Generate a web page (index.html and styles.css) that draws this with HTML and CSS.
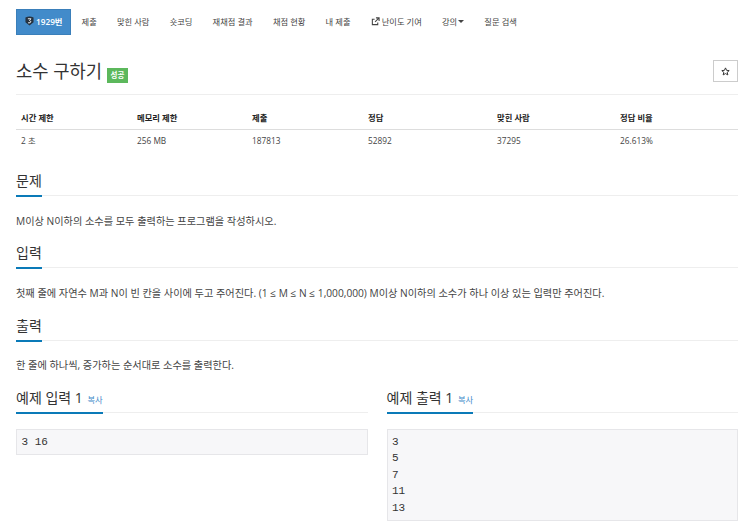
FILE: index.html
```html
<!DOCTYPE html>
<html lang="ko">
<head>
<meta charset="utf-8">
<title>소수 구하기</title>
<link rel="stylesheet" href="styles.css">
</head>
<body>
<div class="page">
  <nav class="tabs">
    <a class="tab active"><svg class="shield" viewBox="0 0 10 11" width="9" height="10"><path d="M.5 1.500Q5 -.5 9.500 1.500V7L5 10.500.5 7z" fill="#26323f"/><path d="M3.200 3h3.400L5 5l1.600 1.200-1 1.300H3.400" fill="none" stroke="#fff" stroke-width="1"/></svg>1929번</a>
    <a class="tab">제출</a>
    <a class="tab">맞힌 사람</a>
    <a class="tab">숏코딩</a>
    <a class="tab">재채점 결과</a>
    <a class="tab">채점 현황</a>
    <a class="tab">내 제출</a>
    <a class="tab"><svg class="ext" viewBox="0 0 10 10" width="9" height="9"><path d="M7.500 6v2.500h-6v-6H4M5.500 1h3.500v3.500M9 1L4.500 5.500" fill="none" stroke="#444" stroke-width="1.200"/></svg>난이도 기여</a>
    <a class="tab">강의<span class="caret"></span></a>
    <a class="tab">질문 검색</a>
  </nav>
  <header class="title-row">
    <h1 class="title">소수 구하기 <span class="badge">성공</span></h1>
    <button class="star" aria-label="즐겨찾기"><svg viewBox="0 0 10 10" width="9" height="9"><path d="M5 1l1.200 2.700 2.900.3-2.200 1.900.7 2.900L5 7.300 2.400 8.800l.7-2.900L.9 4l2.900-.3z" fill="none" stroke="#333" stroke-width="1.100"/></svg></button>
  </header>
  <table class="info">
    <thead>
      <tr><th>시간 제한</th><th>메모리 제한</th><th>제출</th><th>정답</th><th>맞힌 사람</th><th>정답 비율</th></tr>
    </thead>
    <tbody>
      <tr><td>2 초</td><td>256 MB</td><td>187813</td><td>52892</td><td>37295</td><td>26.613%</td></tr>
    </tbody>
  </table>
  <section class="sec">
    <h2 class="head"><span class="head-text">문제</span></h2>
    <p class="body">M이상 N이하의 소수를 모두 출력하는 프로그램을 작성하시오.</p>
  </section>
  <section class="sec">
    <h2 class="head"><span class="head-text">입력</span></h2>
    <p class="body">첫째 줄에 자연수 M과 N이 빈 칸을 사이에 두고 주어진다. (1 ≤ M ≤ N ≤ 1,000,000) M이상 N이하의 소수가 하나 이상 있는 입력만 주어진다.</p>
  </section>
  <section class="sec">
    <h2 class="head"><span class="head-text">출력</span></h2>
    <p class="body">한 줄에 하나씩, 증가하는 순서대로 소수를 출력한다.</p>
  </section>
  <div class="samples">
    <section>
      <h2 class="head"><span class="head-text">예제 입력 1 <a class="copy">복사</a></span></h2>
      <pre class="code">3 16</pre>
    </section>
    <section>
      <h2 class="head"><span class="head-text">예제 출력 1 <a class="copy">복사</a></span></h2>
      <pre class="code">3
5
7
11
13</pre>
    </section>
  </div>
</div>
</body>
</html>
```
FILE: styles.css
```css
* { box-sizing: border-box; }
html, body { margin: 0; padding: 0; height: 532px; overflow: hidden; background: #fff; }
body { font-family: "Open Sans", "Noto Sans CJK KR", sans-serif; color: #333; }
.page { padding: 9px 12px 0 16px; }
.tabs { display: flex; height: 26px; font-size: 8.250px; color: #444; }
.tab { display: flex; align-items: center; padding: 0 10.100px 2px; white-space: nowrap; }
.tab.active { background: #428bca; color: #fff; border: 1px solid #3a7fba; padding: 0 8px 2px; font-weight: 600; }
.shield { margin-right: 2px; }
.ext { margin-right: 2px; }
.caret { display: inline-block; margin-left: 1px; border-top: 3px solid #444; border-left: 3px solid transparent; border-right: 3px solid transparent; }
.title-row { display: flex; justify-content: space-between; align-items: flex-start; height: 60px; padding-top: 25px; border-bottom: 1px solid #eee; }
.title { margin: 0; font-size: 17.700px; line-height: 22px; font-weight: 400; color: #333; }
.badge { display: inline-block; vertical-align: 0; background: #5cb85c; color: #fff; font-size: 7.500px; line-height: 14px; height: 15px; padding: 0 4px; font-weight: 600; }
.star { display: flex; align-items: center; justify-content: center; width: 25px; height: 22px; padding: 0; background: #fff; border: 1px solid #ccc; }
.info { width: 100%; margin-top: 12px; border-collapse: collapse; table-layout: fixed; font-size: 8.300px; }
.info th { text-align: left; font-weight: 700; padding: 0 5px 2px; height: 22px; border-bottom: 1px solid #ddd; color: #222; }
.info td { padding: 0 5px; height: 22px; color: #444; }
.info th:nth-child(1), .info th:nth-child(3) { width: 116px; }
.info th:nth-child(2) { width: 115px; }
.info th:nth-child(4) { width: 129px; }
.info th:nth-child(5) { width: 123px; }
.info + .sec { margin-top: 21px; }
.head { margin: 0; height: 24px; border-bottom: 1px solid #eee; font-size: 14px; line-height: 17px; font-weight: 400; color: #333; }
.head-text { display: inline-block; height: 25px; border-bottom: 2px solid #0a7ab8; }
.body { margin: 0; height: 48.350px; padding-top: 16.500px; font-size: 10.200px; line-height: 16px; color: #444; white-space: nowrap; }
.samples { display: grid; grid-template-columns: 1fr 1fr; gap: 19px; }
.copy { font-size: 8.300px; color: #428bca; margin-left: 1px; }
.code { margin: 16px 0 0; padding: 4px 4.500px; background: #f7f7f9; border: 1px solid #e6e6e9; font-family: "Liberation Mono", monospace; font-size: 11px; line-height: 16.400px; color: #333; }
```
